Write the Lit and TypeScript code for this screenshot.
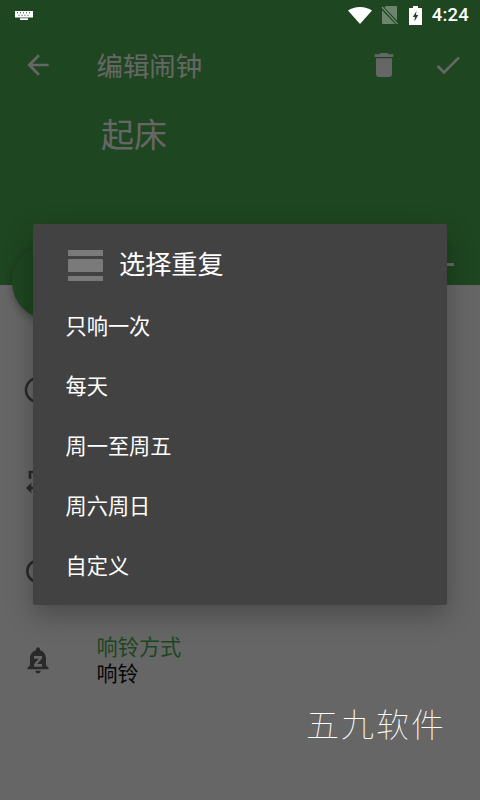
import { LitElement, html, css, svg } from 'lit';
import { customElement } from 'lit/decorators.js';

const icon = (d: unknown, cls = '') => html`<svg class="icon ${cls}" viewBox="0 0 24 24">${d}</svg>`;

const ARROW = svg`<path d="M20 11H7.83l5.59-5.59L12 4l-8 8 8 8 1.41-1.41L7.83 13H20v-2z"/>`;
const TRASH = svg`<path d="M6 19c0 1.1.9 2 2 2h8c1.1 0 2-.9 2-2V7H6v12zM19 4h-3.5l-1-1h-5l-1 1H5v2h14V4z"/>`;
const CHECK = svg`<path d="M9 16.17L4.83 12l-1.42 1.41L9 19 21 7l-1.41-1.41z"/>`;
const CLOCK = svg`<path d="M11.99 2C6.47 2 2 6.48 2 12s4.47 10 9.99 10C17.52 22 22 17.52 22 12S17.52 2 11.99 2zM12 20c-4.42 0-8-3.58-8-8s3.58-8 8-8 8 3.58 8 8-3.58 8-8 8zM12.5 7H11v6l5.25 3.15.75-1.23-4.5-2.67z"/>`;
const REPEAT = svg`<path d="M7 7h10v3l4-4-4-4v3H5v6h2V7zm10 10H7v-3l-4 4 4 4v-3h12v-6h-2v4z"/>`;
const TIMER = svg`<path d="M15 1H9v2h6V1zm-4 13h2V8h-2v6zm8.030-6.610l1.420-1.420c-.430-.510-.900-.990-1.410-1.410l-1.420 1.420C16.070 4.740 14.120 4 12 4c-4.970 0-9 4.030-9 9s4.020 9 9 9 9-4.030 9-9c0-2.120-.740-4.070-1.970-5.610zM12 20c-3.870 0-7-3.130-7-7s3.130-7 7-7 7 3.130 7 7-3.130 7-7 7z"/>`;
const SNOOZE = svg`<path fill-rule="evenodd" d="M9 11h3.630L9 15.200V17h6v-2h-3.630L15 10.800V9H9v2zm9 5v-5c0-3.070-1.640-5.640-4.500-6.320V4c0-.830-.670-1.500-1.500-1.500s-1.500.670-1.500 1.500v.680C7.630 5.360 6 7.920 6 11v5l-2 2v1h16v-1l-2-2zm-6 6c1.100 0 2-.900 2-2h-4c0 1.100.900 2 2 2z"/>`;

const OPTIONS = ['只响一次', '每天', '周一至周五', '周六周日', '自定义'];
const ROWS = [
  { d: CLOCK },
  { d: REPEAT },
  { d: TIMER },
  { d: SNOOZE, title: '响铃方式', value: '响铃' },
];

@customElement('app-root')
export class AppRoot extends LitElement {
  static styles = css`
    :host {
      display: block;
      position: relative;
      width: 480px;
      height: 800px;
      overflow: hidden;
      background: #fff;
      font-family: 'Roboto', 'Noto Sans CJK SC', sans-serif;
    }
    .icon {
      display: block;
      width: 32px;
      height: 32px;
      fill: currentColor;
      flex: none;
    }
    .header {
      position: relative;
      height: 285px;
      background: #4caf50;
      color: #fff;
    }
    .status {
      position: relative;
      z-index: 3;
      height: 30px;
      display: flex;
      align-items: center;
      padding: 0 11px 0 15px;
      color: #fff;
    }
    .keyboard { width: 18px; height: 9px; }
    .spacer { flex: 1; }
    .wifi { width: 24px; height: 17px; }
    .sim { width: 17px; height: 18px; margin-left: 9px; }
    .battery { width: 13px; height: 19px; margin-left: 11px; }
    .clock {
      margin-left: 10px;
      font-size: 18.5px;
      font-weight: 500;
      letter-spacing: 0.2px;
    }
    .toolbar {
      height: 70px;
      display: flex;
      align-items: center;
      padding: 0 16px 0 21.5px;
    }
    .toolbar h1 {
      margin: 0 0 2px 43px;
      font-size: 26.4px;
      font-weight: 400;
      flex: 1;
    }
    .toolbar .check { margin-left: 32px; }
    .name {
      padding: 2px 0 0 101px;
      font-size: 33px;
      line-height: 68px;
    }
    .dash {
      position: absolute;
      right: 26px;
      top: 263px;
      width: 12px;
      height: 3px;
      background: #fff;
    }
    .fab {
      position: absolute;
      left: 12px;
      top: 244px;
      width: 76px;
      height: 76px;
      border-radius: 50%;
      background: #4caf50;
      box-shadow: 0 3px 8px rgba(0, 0, 0, 0.3);
    }
    .rows {
      display: flex;
      flex-direction: column;
      padding-top: 60px;
    }
    .row {
      height: 90px;
      display: flex;
      align-items: center;
      gap: 43px;
      padding-left: 21.5px;
      color: #666;
    }
    .row .text { padding-top: 2px; }
    .row .title {
      color: #4caf50;
      font-size: 21.2px;
      line-height: 26px;
    }
    .row .value {
      color: #111;
      font-size: 21px;
      line-height: 26px;
    }
    .scrim {
      position: absolute;
      inset: 0;
      z-index: 1;
      background: rgba(0, 0, 0, 0.6);
    }
    .dialog {
      position: absolute;
      z-index: 2;
      left: 33px;
      top: 224px;
      width: 414px;
      height: 381px;
      box-sizing: border-box;
      background: #424242;
      border-radius: 2px;
      box-shadow: 0 10px 28px rgba(0, 0, 0, 0.28);
      color: #fff;
    }
    .dialog-head {
      height: 70px;
      padding: 7px 0 0 35px;
      box-sizing: border-box;
      display: flex;
      align-items: center;
      gap: 16px;
      font-size: 26.2px;
    }
    .bars {
      width: 35px;
      display: flex;
      flex-direction: column;
      gap: 3.5px;
      margin-top: 6px;
    }
    .bars span { display: block; height: 5.5px; background: #7a7a7a; }
    .bars span:nth-child(2) { height: 13px; border-radius: 1px; }
    .option {
      height: 60px;
      display: flex;
      align-items: center;
      padding-left: 32.5px;
      font-size: 21.2px;
    }
    .mark {
      position: absolute;
      z-index: 3;
      left: 306px;
      top: 703px;
      color: #fff;
      font-size: 33px;
      font-weight: 100;
      letter-spacing: 2px;
      line-height: 46px;
    }
  `;

  render() {
    return html`
      <div class="header">
        <div class="status">
          <svg class="keyboard" viewBox="0 0 18 9" fill="#fff">
            <path d="M0 0h18v6.500H0zM5 7.300h8V9H5z"/>
            <path fill="#1e4620" d="M2 1.300h1v1H2zm3 0h1v1H5zm3 0h1v1H8zm3 0h1v1h-1zm3 0h1v1h-1zM3.500 3.800h1v1h-1zm3 0h1v1h-1zm3 0h1v1h-1zm3 0h1v1h-1z"/>
          </svg>
          <div class="spacer"></div>
          <svg class="wifi" viewBox="0 0 24 17" fill="#fff"><path d="M12 17L0 3.600C3.200 1.300 7.400 0 12 0s8.800 1.300 12 3.600z"/></svg>
          <svg class="sim" viewBox="0 0 17 18">
            <path fill="#fff" fill-opacity=".35" d="M5 0h10a1 1 0 0 1 1 1v13.500L3.500 1.500zM1 4v13a1 1 0 0 0 1 1h12.300L1 4.200z"/>
            <path stroke="#fff" stroke-opacity=".4" stroke-width="1.200" d="M1 1l15.500 17"/>
          </svg>
          <svg class="battery" viewBox="0 0 13 19">
            <path fill="#fff" d="M4 0h5v2h3.500a.5.5 0 0 1 .5.500v16a.5.5 0 0 1-.5.500H.5a.5.5 0 0 1-.5-.500v-16A.5.5 0 0 1 .5 2H4z"/>
            <path fill="#1e4620" d="M7.500 5L3.800 11h2.200l-.6 4.500L9.300 9H7z"/>
          </svg>
          <span class="clock">4:24</span>
        </div>
        <div class="toolbar">
          ${icon(ARROW)}
          <h1>编辑闹钟</h1>
          ${icon(TRASH)}
          ${icon(CHECK, 'check')}
        </div>
        <div class="name">起床</div>
        <div class="dash"></div>
      </div>
      <div class="fab"></div>
      <div class="rows">
        ${ROWS.map(
          (r) => html`<div class="row">
            ${icon(r.d)}
            ${r.title
              ? html`<div class="text">
                  <div class="title">${r.title}</div>
                  <div class="value">${r.value}</div>
                </div>`
              : ''}
          </div>`
        )}
      </div>
      <div class="scrim"></div>
      <div class="dialog">
        <div class="dialog-head">
          <div class="bars"><span></span><span></span><span></span></div>
          <span>选择重复</span>
        </div>
        ${OPTIONS.map((o) => html`<div class="option">${o}</div>`)}
      </div>
      <div class="mark">五九软件</div>
    `;
  }
}
